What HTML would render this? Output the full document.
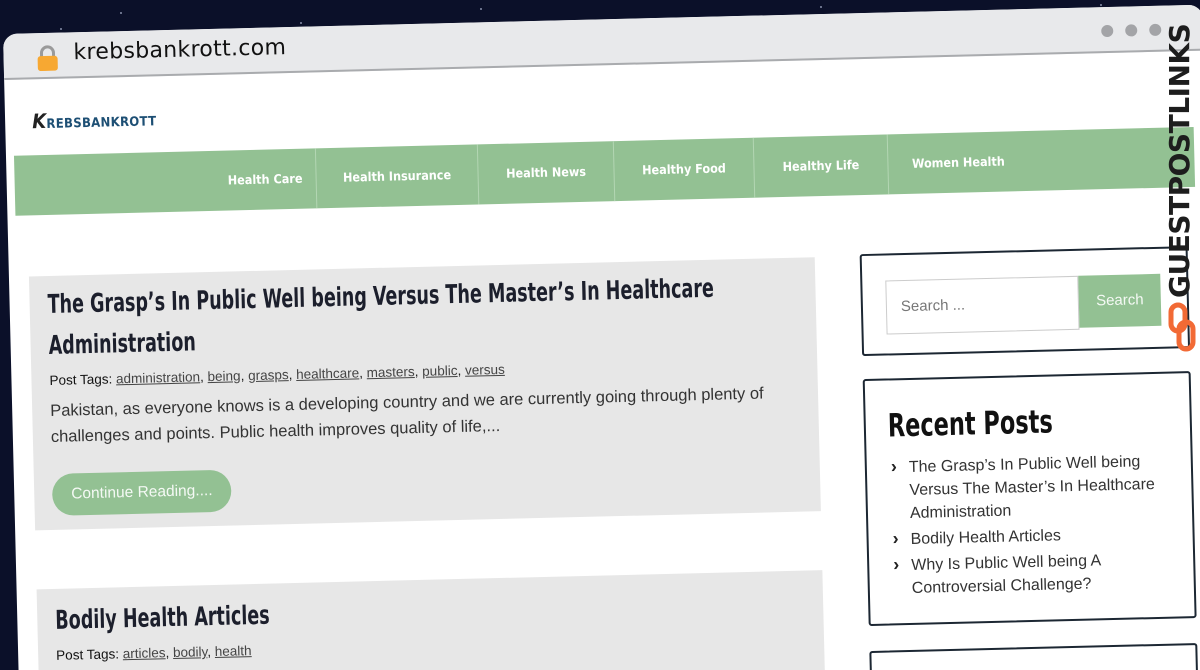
<!DOCTYPE html>
<html><head><meta charset="utf-8"><style>
*{margin:0;padding:0;box-sizing:border-box}
html,body{width:1200px;height:670px;overflow:hidden}
body{background:#0b1029;position:relative;font-family:"Liberation Sans",sans-serif}
.star{position:absolute;width:2px;height:2px;background:#8890aa;border-radius:50%}
#win{position:absolute;left:3px;top:34px;width:1200px;height:700px;background:#fff;border-radius:14px;transform-origin:0 0;transform:rotate(-1.4deg);overflow:hidden}
#bar{position:absolute;left:0;top:0;width:100%;height:46px;background:#e8e9eb;border-bottom:2px solid #a9abae}
.lock{position:absolute;left:33px;top:12px;width:22px;height:26px}
.url{position:absolute;left:70px;top:8px;font-size:22px;color:#111;font-family:"DejaVu Sans",sans-serif;letter-spacing:.3px}
.dot{position:absolute;top:18px;width:12px;height:12px;border-radius:50%;background:#a3a4a7}
.hand{font-family:"DejaVu Sans Condensed",sans-serif;font-weight:bold}
#logo{position:absolute;left:27px;top:76px;font-size:13px;color:#1d4f74;font-family:"DejaVu Sans Condensed",sans-serif;font-weight:bold;letter-spacing:.3px}
#nav{position:absolute;left:8px;top:122px;width:1180px;height:60px;background:#93c193}
#nav div{position:absolute;top:0;height:60px;line-height:60px;color:#fff;font-size:12.5px;border-right:1px solid #b3d6b3;text-align:center}
.post{position:absolute;left:20px;width:786px;background:#e7e7e7}
.post h2{font-size:26px;color:#1c1f2c;line-height:41px;font-weight:bold;font-family:"DejaVu Sans Condensed",sans-serif;width:950px;transform:scaleX(.75);transform-origin:0 0}
.tags{font-size:13.5px;color:#222;margin-top:6px}
.tags span{color:#444;text-decoration:underline}
.ex{color:#333;line-height:26px;margin-top:10px;font-family:"Liberation Sans",sans-serif;font-size:16.5px}
.btn{display:inline-block;margin-top:24px;background:#93c193;color:#f4f9f4;border-radius:22px;padding:12px 19px;font-size:15.5px}
.wid{position:absolute;left:851px;width:328px;border:2px solid #1c2733;border-radius:3px;background:#fff}
.rp li{list-style:none;color:#333;line-height:23px;position:relative;padding-left:20px;margin-bottom:3px;font-size:16px}
.rp li:before{content:"›";position:absolute;left:2px;top:-1px;font-weight:bold;font-size:18px;color:#222}
</style></head><body>
<div class="star" style="left:120px;top:12px"></div><div class="star" style="left:300px;top:22px"></div><div class="star" style="left:480px;top:8px"></div><div class="star" style="left:650px;top:18px"></div><div class="star" style="left:820px;top:6px"></div><div class="star" style="left:960px;top:14px"></div><div class="star" style="left:60px;top:28px"></div><div class="star" style="left:1100px;top:4px"></div>
<div id="win">
 <div id="bar">
  <svg class="lock" viewBox="0 0 22 26"><path d="M5 12V8a6 6 0 0 1 12 0v4" fill="none" stroke="#9a9a9a" stroke-width="3"/><rect x="1" y="11" width="20" height="15" rx="3" fill="#f7a832"/></svg>
  <div class="url">krebsbankrott.com</div>
  <div class="dot" style="left:1098px"></div><div class="dot" style="left:1122px"></div><div class="dot" style="left:1146px"></div>
 </div>
 <div id="logo"><span style="font-size:20px;color:#222;font-style:italic">K</span>REBSBANKROTT</div>
 <div id="nav" class="hand">
  <div style="left:0;width:302px;padding-left:200px">Health Care</div>
  <div style="left:302px;width:162px">Health Insurance</div>
  <div style="left:464px;width:136px">Health News</div>
  <div style="left:600px;width:140px">Healthy Food</div>
  <div style="left:740px;width:134px">Healthy Life</div>
  <div style="left:874px;width:140px;border:none">Women Health</div>
 </div>
 <div class="post" style="top:243px;height:254px;padding:9px 18px">
  <h2>The Grasp’s In Public Well being Versus The Master’s In Healthcare Administration</h2>
  <div class="tags"><b style="font-weight:normal;color:#111">Post Tags:</b> <span>administration</span>, <span>being</span>, <span>grasps</span>, <span>healthcare</span>, <span>masters</span>, <span>public</span>, <span>versus</span></div>
  <div class="ex">Pakistan, as everyone knows is a developing country and we are currently going through plenty of challenges and points. Public health improves quality of life,...</div>
  <div class="btn">Continue Reading....</div>
 </div>
 <div class="post" style="top:556px;height:140px;padding:12px 18px">
  <h2>Bodily Health Articles</h2>
  <div class="tags"><b style="font-weight:normal;color:#111">Post Tags:</b> <span>articles</span>, <span>bodily</span>, <span>health</span></div>
 </div>
 <div class="wid" style="top:241px;height:102px">
  <div style="position:absolute;left:23px;top:25px;width:193px;height:54px;border:1px solid #ccc;color:#777;font-size:15px;line-height:52px;padding-left:14px">Search ...</div>
  <div style="position:absolute;left:216px;top:25px;width:82px;height:52px;background:#93c193;color:#f4f9f4;font-size:15px;line-height:52px;text-align:center">Search</div>
 </div>
 <div class="wid" style="top:366px;height:247px;padding:26px 22px">
  <div class="hand" style="font-size:32px;color:#111;margin-bottom:12px;width:300px;transform:scaleX(.78);transform-origin:0 0">Recent Posts</div>
  <ul class="rp">
   <li>The Grasp’s In Public Well being Versus The Master’s In Healthcare Administration</li>
   <li>Bodily Health Articles</li>
   <li>Why Is Public Well being A Controversial Challenge?</li>
  </ul>
 </div>
 <div class="wid" style="top:638px;height:100px"></div>
</div>
<div style="position:absolute;left:1163px;top:298px;transform-origin:0 0;transform:rotate(-90deg);font-family:'DejaVu Sans',sans-serif;font-weight:bold;font-size:28px;color:#1d1d1d;letter-spacing:-.5px;white-space:nowrap">GUESTPOSTLINKS</div>
<svg style="position:absolute;left:1168px;top:302px" width="28" height="50" viewBox="0 0 28 50"><rect x="3" y="3" width="14" height="26" rx="7" fill="none" stroke="#f26a35" stroke-width="5"/><rect x="11" y="20" width="14" height="27" rx="7" fill="none" stroke="#f26a35" stroke-width="5"/></svg>
</body></html>
